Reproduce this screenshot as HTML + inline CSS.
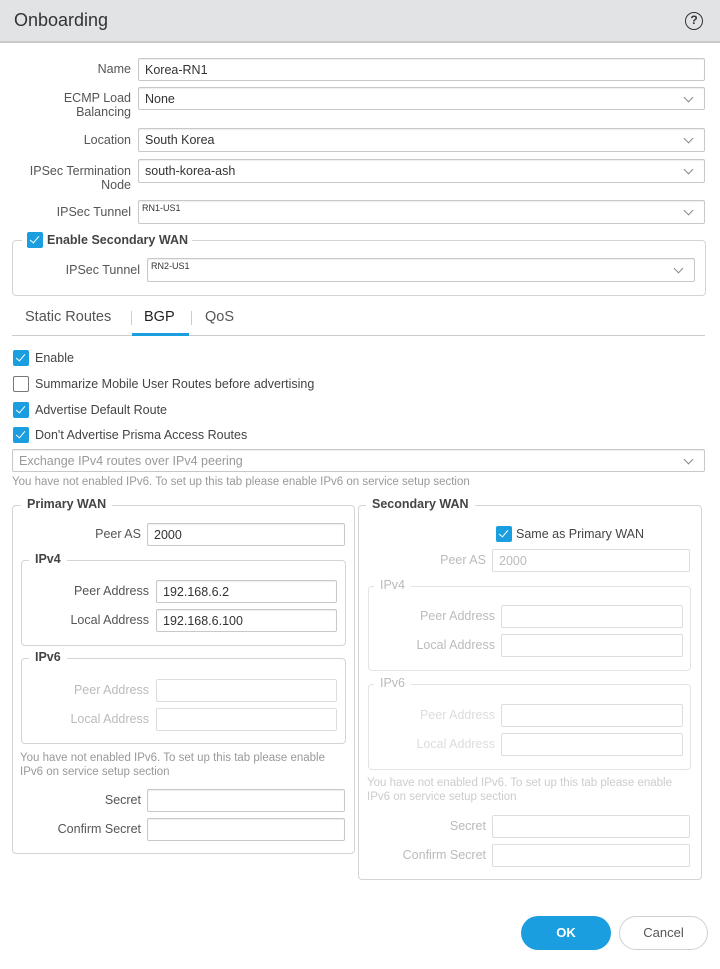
<!DOCTYPE html>
<html><head><meta charset="utf-8">
<style>
*{box-sizing:border-box;margin:0;padding:0}
body{width:720px;height:969px;background:#fff;font-family:"Liberation Sans",sans-serif;color:#333;position:relative;overflow:hidden;font-size:12.5px}
.a{position:absolute}
.hdr{left:0;top:0;width:720px;height:43px;background:#e2e3e5;border-bottom:2px solid #c9cacc}
.title{left:14px;top:10px;font-size:18px;color:#333}
.help{left:685px;top:12px;width:18px;height:18px;border:1.6px solid #333;border-radius:50%;font-size:12px;font-weight:bold;text-align:center;line-height:15px}
.lbl{text-align:right;color:#555;line-height:14px}
.inp{border:1px solid #c8c8c8;border-radius:2px;background:#fff;padding-left:6px;line-height:22px;color:#333;box-shadow:inset 0 1px 1px #eee}
.dd::after{content:"";position:absolute;right:12px;top:6px;width:6px;height:6px;border-right:1.2px solid #888;border-bottom:1.2px solid #888;transform:rotate(45deg)}
.fs{border:1px solid #d4d4d4;border-radius:4px}
.lg{background:#fff;padding:0 6px;font-weight:bold;color:#444}
.cb{width:16px;height:16px;border-radius:2px;background:#1a9ee0}
.cb::after{content:"";position:absolute;left:5px;top:2px;width:4px;height:8px;border-right:1.6px solid #fff;border-bottom:1.6px solid #fff;transform:rotate(40deg)}
.cbo{width:16px;height:16px;border-radius:2px;border:1.3px solid #777;background:#fff}
.dis{color:#bbb}
.disi{border-color:#ddd;box-shadow:none;color:#bbb}
.fsd{border-color:#e3e3e3}
.note{color:#999;font-size:11.5px;line-height:14px}
</style></head><body>
<div class="a hdr"></div>
<div class="a title">Onboarding</div>
<div class="a help">?</div>

<div class="a lbl" style="left:0;width:131px;top:62px">Name</div>
<div class="a inp" style="left:138px;top:58px;width:567px;height:23px;line-height:21px;padding-top:1px">Korea-RN1</div>
<div class="a lbl" style="left:0;width:131px;top:91px">ECMP Load<br>Balancing</div>
<div class="a inp dd" style="left:138px;top:87px;width:567px;height:23px;line-height:21px;padding-top:1px">None</div>
<div class="a lbl" style="left:0;width:131px;top:133px">Location</div>
<div class="a inp dd" style="left:138px;top:128px;width:567px;height:24px">South Korea</div>
<div class="a lbl" style="left:0;width:131px;top:164px">IPSec Termination<br>Node</div>
<div class="a inp dd" style="left:138px;top:159px;width:567px;height:24px">south-korea-ash</div>
<div class="a lbl" style="left:0;width:131px;top:205px">IPSec Tunnel</div>
<div class="a inp dd" style="left:138px;top:200px;width:567px;height:24px;font-size:9px;line-height:14px;padding-left:3px">RN1-US1</div>

<div class="a fs" style="left:12px;top:240px;width:694px;height:56px"></div>
<div class="a lg" style="left:22px;top:232px;width:170px;height:16px"></div>
<div class="a cb" style="left:27px;top:232px"></div>
<div class="a" style="left:47px;top:233px;font-weight:bold;color:#444">Enable Secondary WAN</div>
<div class="a lbl" style="left:0;width:140px;top:263px">IPSec Tunnel</div>
<div class="a inp dd" style="left:147px;top:258px;width:548px;height:24px;font-size:9px;line-height:14px;padding-left:3px">RN2-US1</div>

<div class="a" style="left:25px;top:309px;font-size:14.5px;color:#555">Static Routes</div>
<div class="a" style="left:131px;top:311px;width:1px;height:14px;background:#ccc"></div>
<div class="a" style="left:144px;top:309px;font-size:14.5px;color:#222">BGP</div>
<div class="a" style="left:191px;top:311px;width:1px;height:14px;background:#ccc"></div>
<div class="a" style="left:205px;top:309px;font-size:14.5px;color:#555">QoS</div>
<div class="a" style="left:12px;top:335px;width:693px;height:1px;background:#ccc"></div>
<div class="a" style="left:132px;top:333px;width:57px;height:3px;background:#1a9ee0"></div>

<div class="a cb" style="left:13px;top:350px"></div><div class="a" style="left:35px;top:351px;color:#444">Enable</div>
<div class="a cbo" style="left:13px;top:376px"></div><div class="a" style="left:35px;top:377px;color:#444">Summarize Mobile User Routes before advertising</div>
<div class="a cb" style="left:13px;top:402px"></div><div class="a" style="left:35px;top:403px;color:#444">Advertise Default Route</div>
<div class="a cb" style="left:13px;top:427px"></div><div class="a" style="left:35px;top:428px;color:#444">Don't Advertise Prisma Access Routes</div>
<div class="a inp dd" style="left:12px;top:449px;width:693px;height:23px;line-height:21px;padding-top:1px;color:#999">Exchange IPv4 routes over IPv4 peering</div>
<div class="a note" style="left:12px;top:475px">You have not enabled IPv6. To set up this tab please enable IPv6 on service setup section</div>

<!-- Primary -->
<div class="a fs" style="left:12px;top:505px;width:343px;height:349px"></div>
<div class="a lg" style="left:21px;top:497px">Primary WAN</div>
<div class="a lbl" style="left:0;width:141px;top:527px">Peer AS</div>
<div class="a inp" style="left:147px;top:523px;width:198px;height:23px;line-height:21px;padding-top:1px">2000</div>
<div class="a fs" style="left:21px;top:560px;width:325px;height:86px"></div>
<div class="a lg" style="left:29px;top:552px">IPv4</div>
<div class="a lbl" style="left:0;width:149px;top:584px">Peer Address</div>
<div class="a inp" style="left:156px;top:580px;width:181px;height:23px;line-height:21px;padding-top:1px">192.168.6.2</div>
<div class="a lbl" style="left:0;width:149px;top:613px">Local Address</div>
<div class="a inp" style="left:156px;top:609px;width:181px;height:23px;line-height:21px;padding-top:1px">192.168.6.100</div>
<div class="a fs" style="left:21px;top:658px;width:325px;height:86px"></div>
<div class="a lg" style="left:29px;top:650px">IPv6</div>
<div class="a lbl dis" style="left:0;width:149px;top:683px">Peer Address</div>
<div class="a inp disi" style="left:156px;top:679px;width:181px;height:23px"></div>
<div class="a lbl dis" style="left:0;width:149px;top:712px">Local Address</div>
<div class="a inp disi" style="left:156px;top:708px;width:181px;height:23px"></div>
<div class="a note" style="left:20px;top:751px">You have not enabled IPv6. To set up this tab please enable<br>IPv6 on service setup section</div>
<div class="a lbl" style="left:0;width:141px;top:793px">Secret</div>
<div class="a inp" style="left:147px;top:789px;width:198px;height:23px"></div>
<div class="a lbl" style="left:0;width:141px;top:822px">Confirm Secret</div>
<div class="a inp" style="left:147px;top:818px;width:198px;height:23px"></div>

<!-- Secondary -->
<div class="a fs" style="left:358px;top:505px;width:344px;height:375px"></div>
<div class="a lg" style="left:366px;top:497px">Secondary WAN</div>
<div class="a cb" style="left:496px;top:526px"></div>
<div class="a" style="left:516px;top:527px;color:#444">Same as Primary WAN</div>
<div class="a lbl dis" style="left:0;width:486px;top:553px">Peer AS</div>
<div class="a inp disi" style="left:492px;top:549px;width:198px;height:23px;line-height:21px;padding-top:1px">2000</div>
<div class="a fs fsd" style="left:368px;top:586px;width:323px;height:85px"></div>
<div class="a lg dis" style="left:374px;top:578px;font-weight:normal">IPv4</div>
<div class="a lbl dis" style="left:0;width:495px;top:609px">Peer Address</div>
<div class="a inp disi" style="left:501px;top:605px;width:182px;height:23px"></div>
<div class="a lbl dis" style="left:0;width:495px;top:638px">Local Address</div>
<div class="a inp disi" style="left:501px;top:634px;width:182px;height:23px"></div>
<div class="a fs fsd" style="left:368px;top:684px;width:323px;height:86px"></div>
<div class="a lg dis" style="left:374px;top:676px;font-weight:normal">IPv6</div>
<div class="a lbl" style="left:0;width:495px;top:708px;color:#ddd">Peer Address</div>
<div class="a inp disi" style="left:501px;top:704px;width:182px;height:23px"></div>
<div class="a lbl" style="left:0;width:495px;top:737px;color:#ddd">Local Address</div>
<div class="a inp disi" style="left:501px;top:733px;width:182px;height:23px"></div>
<div class="a note" style="left:367px;top:776px;color:#ccc">You have not enabled IPv6. To set up this tab please enable<br>IPv6 on service setup section</div>
<div class="a lbl dis" style="left:0;width:486px;top:819px">Secret</div>
<div class="a inp disi" style="left:492px;top:815px;width:198px;height:23px"></div>
<div class="a lbl dis" style="left:0;width:486px;top:848px">Confirm Secret</div>
<div class="a inp disi" style="left:492px;top:844px;width:198px;height:23px"></div>

<div class="a" style="left:521px;top:916px;width:90px;height:34px;border-radius:17px;background:#1a9ee0;color:#fff;font-weight:bold;text-align:center;line-height:34px;font-size:13px">OK</div>
<div class="a" style="left:619px;top:916px;width:89px;height:34px;border-radius:17px;border:1.5px solid #d0d0d0;color:#555;text-align:center;line-height:31px;font-size:13px">Cancel</div>
</body></html>
